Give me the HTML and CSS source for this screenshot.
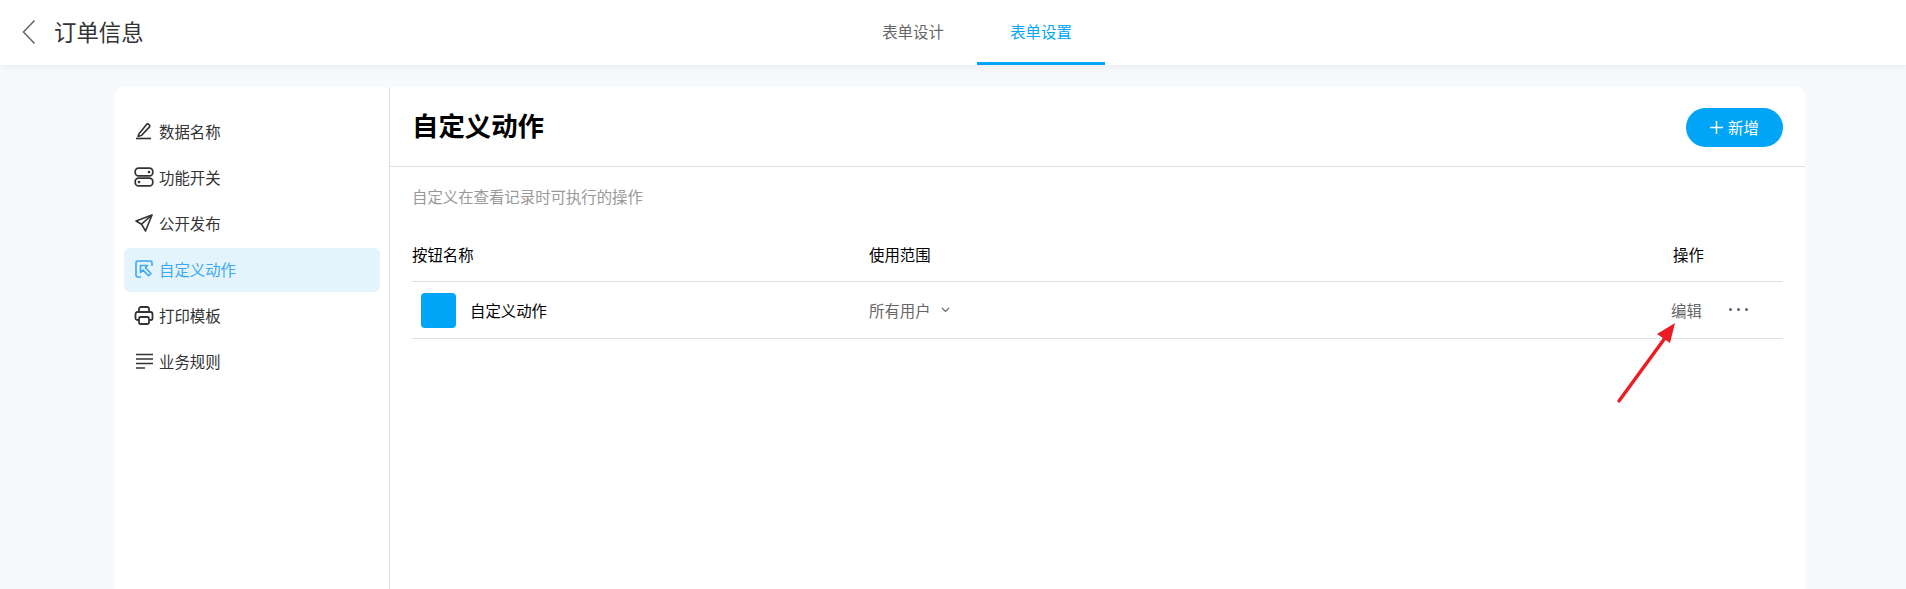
FILE: index.html
```html
<!DOCTYPE html>
<html lang="zh-CN">
<head>
<meta charset="utf-8">
<title>订单信息</title>
<link rel="stylesheet" href="styles.css">
</head>
<body>
<header class="topbar">
  <div class="topbar-left">
    <svg class="back" width="14" height="26" viewBox="0 0 14 26"><path d="M12.5 1.5 1.5 13l11 11.5" fill="none" stroke="#666" stroke-width="1.5"/></svg>
    <h1 class="page-title">订单信息</h1>
  </div>
  <nav class="tabs">
    <a class="tab">表单设计</a>
    <a class="tab tab-active">表单设置</a>
  </nav>
</header>
<div class="page">
  <section class="card">
    <aside class="sidebar">
      <a class="side-item">
        <svg class="side-icon" width="18" height="18" viewBox="0 0 18 18" fill="none" stroke="#333" stroke-width="1.6"><path d="M3.500 12.500 11.500 2.500a1.500 1.500 0 0 1 2.200-.2l.6.5a1.500 1.500 0 0 1 .2 2.100L6.600 13.400l-3.400.9z"/><path d="M1 16.500h15"/></svg>
        <span>数据名称</span>
      </a>
      <a class="side-item">
        <svg class="side-icon" width="20" height="20" viewBox="0 0 20 20" fill="none" stroke="#333" stroke-width="1.7"><rect x="1.200" y="1.200" width="17.600" height="7.600" rx="3.400"/><rect x="1.200" y="11.200" width="17.600" height="7.600" rx="3.400"/><circle cx="15" cy="5" r="1.300" fill="#333" stroke="none"/><circle cx="5" cy="15" r="1.300" fill="#333" stroke="none"/></svg>
        <span>功能开关</span>
      </a>
      <a class="side-item">
        <svg class="side-icon" width="18" height="18" viewBox="0 0 18 18" fill="none" stroke="#333" stroke-width="1.600" stroke-linejoin="round"><path d="M17 1 1 7l5.500 3.200L10.500 17z"/><path d="M17 1 6.500 10.200"/></svg>
        <span>公开发布</span>
      </a>
      <a class="side-item side-active">
        <svg class="side-icon" width="18" height="18" viewBox="0 0 18 18" fill="none" stroke="#3aa9f5" stroke-width="1.600"><path d="M6 17H3a2 2 0 0 1-2-2V3a2 2 0 0 1 2-2h12a2 2 0 0 1 2 2v3"/><path d="M5.500 5.500h7l-2.200 2.200 5.700 5.800-2.300 2.300-5.700-5.700-2.500 2.400z" stroke-linejoin="round"/></svg>
        <span>自定义动作</span>
      </a>
      <a class="side-item">
        <svg class="side-icon" width="19" height="19" viewBox="0 0 19 19" fill="none" stroke="#333" stroke-width="1.800"><path d="M4.500 6V3a2 2 0 0 1 2-2h6a2 2 0 0 1 2 2v3"/><path d="M4 14H2.800A1.800 1.800 0 0 1 1 12.200V8a2 2 0 0 1 2-2h13a2 2 0 0 1 2 2v4.200a1.800 1.800 0 0 1-1.800 1.800H15"/><rect x="4.500" y="11" width="10" height="7" rx="1.500"/></svg>
        <span>打印模板</span>
      </a>
      <a class="side-item">
        <svg class="side-icon" width="18" height="16" viewBox="0 0 18 16" fill="none" stroke="#333" stroke-width="1.500"><path d="M1 1.500h17M1 6h17M1 10.500h17M1 15h9"/></svg>
        <span>业务规则</span>
      </a>
    </aside>
    <main class="content">
      <div class="content-head">
        <h2 class="content-title">自定义动作</h2>
        <button class="add-btn" type="button">
          <svg width="13" height="13" viewBox="0 0 13 13"><path d="M6.500 0v13M0 6.500h13" stroke="#fff" stroke-width="1.500"/></svg>
          <span>新增</span>
        </button>
      </div>
      <div class="content-body">
        <p class="desc">自定义在查看记录时可执行的操作</p>
        <div class="table-row table-head">
          <div>按钮名称</div>
          <div>使用范围</div>
          <div>操作</div>
        </div>
        <div class="table-row table-item">
          <div class="name-cell"><span class="action-icon"></span><span>自定义动作</span></div>
          <div class="scope-cell">所有用户
            <svg width="9" height="6" viewBox="0 0 9 6"><path d="M1 1l3.500 3.500L8 1" fill="none" stroke="#666" stroke-width="1.200"/></svg>
          </div>
          <div class="ops-cell"><a class="edit">编辑</a><span class="more"><i></i><i></i><i></i></span></div>
        </div>
      </div>
    </main>
  </section>
</div>
<svg class="annotation" width="70" height="90" viewBox="0 0 70 90"><path d="M4 79 50 16" stroke="#ed1c24" stroke-width="3.400" stroke-linecap="round"/><path d="M60 1 42 12 55 21z" fill="#ed1c24"/></svg>
</body>
</html>
```
FILE: styles.css
```css
* { box-sizing: border-box; }
html, body { margin: 0; height: 100%; overflow: hidden; }
body {
  background: #f8f9fd;
  font-family: "Noto Sans CJK SC", "Noto Sans", sans-serif;
  font-size: 15.4px;
  color: #333;
  position: relative;
}
.topbar {
  height: 65px;
  background: #fff;
  display: flex;
  box-shadow: 0 2px 8px rgba(0, 0, 0, .06);
  position: relative;
}
.topbar-left {
  width: 849px;
  display: flex;
  align-items: center;
  padding-left: 22px;
}
.back { margin-right: 18px; margin-top: -1px; }
.page-title { margin: -2px 0 0; font-size: 22.400px; font-weight: 400; color: #333; line-height: 1; }
.tabs { display: flex; }
.tab {
  width: 128px;
  display: flex;
  align-items: center;
  justify-content: center;
  color: #666;
  padding-bottom: 3px;
}
.tab-active {
  color: #00a5f8;
  border-bottom: 3px solid #00a5f8;
  padding-bottom: 0;
}
.page { padding: 22px 101px 0 115px; }
.card {
  height: 520px;
  background: #fff;
  border-radius: 8px 8px 0 0;
  display: flex;
}
.sidebar {
  width: 275px;
  flex: none;
  border-right: 1px solid #dfdfe6;
  padding: 23px 9px 0;
  display: flex;
  flex-direction: column;
  gap: 2px;
}
.side-item {
  height: 44px;
  border-radius: 6px;
  padding-left: 10px;
  padding-bottom: 2px;
  display: flex;
  align-items: center;
  color: #333;
}
.side-icon { width: 20px; margin-right: 5px; flex: none; }
.side-active { background: #e3f4fd; color: #3aa9f5; }
.content { flex: 1; min-width: 0; }
.content-head {
  height: 80px;
  border-bottom: 1px solid #dfdfe6;
  padding: 0 22px;
  display: flex;
  align-items: center;
  justify-content: space-between;
}
.content-title { margin: -2px 0 0; font-size: 26.400px; font-weight: 700; color: #000; line-height: 1; }
.add-btn {
  width: 97px;
  height: 39px;
  border: 0;
  border-radius: 20px;
  background: #00a5f8;
  color: #fff;
  font: inherit;
  display: flex;
  align-items: center;
  justify-content: center;
  gap: 5px;
  margin-top: 1px;
}
.content-body { padding: 0 22px; }
.desc {
  margin: 0;
  height: 60px;
  padding-bottom: 3px;
  display: flex;
  align-items: center;
  color: #999;
}
.table-row {
  display: grid;
  grid-template-columns: 457px 804px 1fr;
  align-items: center;
  border-bottom: 1px solid #dfdfe6;
}
.table-head { height: 55px; color: #000; }
.table-item { height: 57px; }
.name-cell {
  display: flex;
  align-items: center;
  color: #000;
  padding-left: 9px;
  gap: 14px;
}
.action-icon {
  width: 35px;
  height: 35px;
  border-radius: 4px;
  background: #00a5f8;
}
.scope-cell { color: #666; display: flex; align-items: center; gap: 10px; margin-top: -1px; }
.ops-cell { display: flex; align-items: center; margin-left: -2px; margin-top: -1px; }
.edit { color: #666; }
.more { display: flex; gap: 5px; margin-left: 27px; }
.more i { width: 3px; height: 3px; border-radius: 50%; background: #5a6172; }
.annotation { position: absolute; left: 1615px; top: 322px; }
```
